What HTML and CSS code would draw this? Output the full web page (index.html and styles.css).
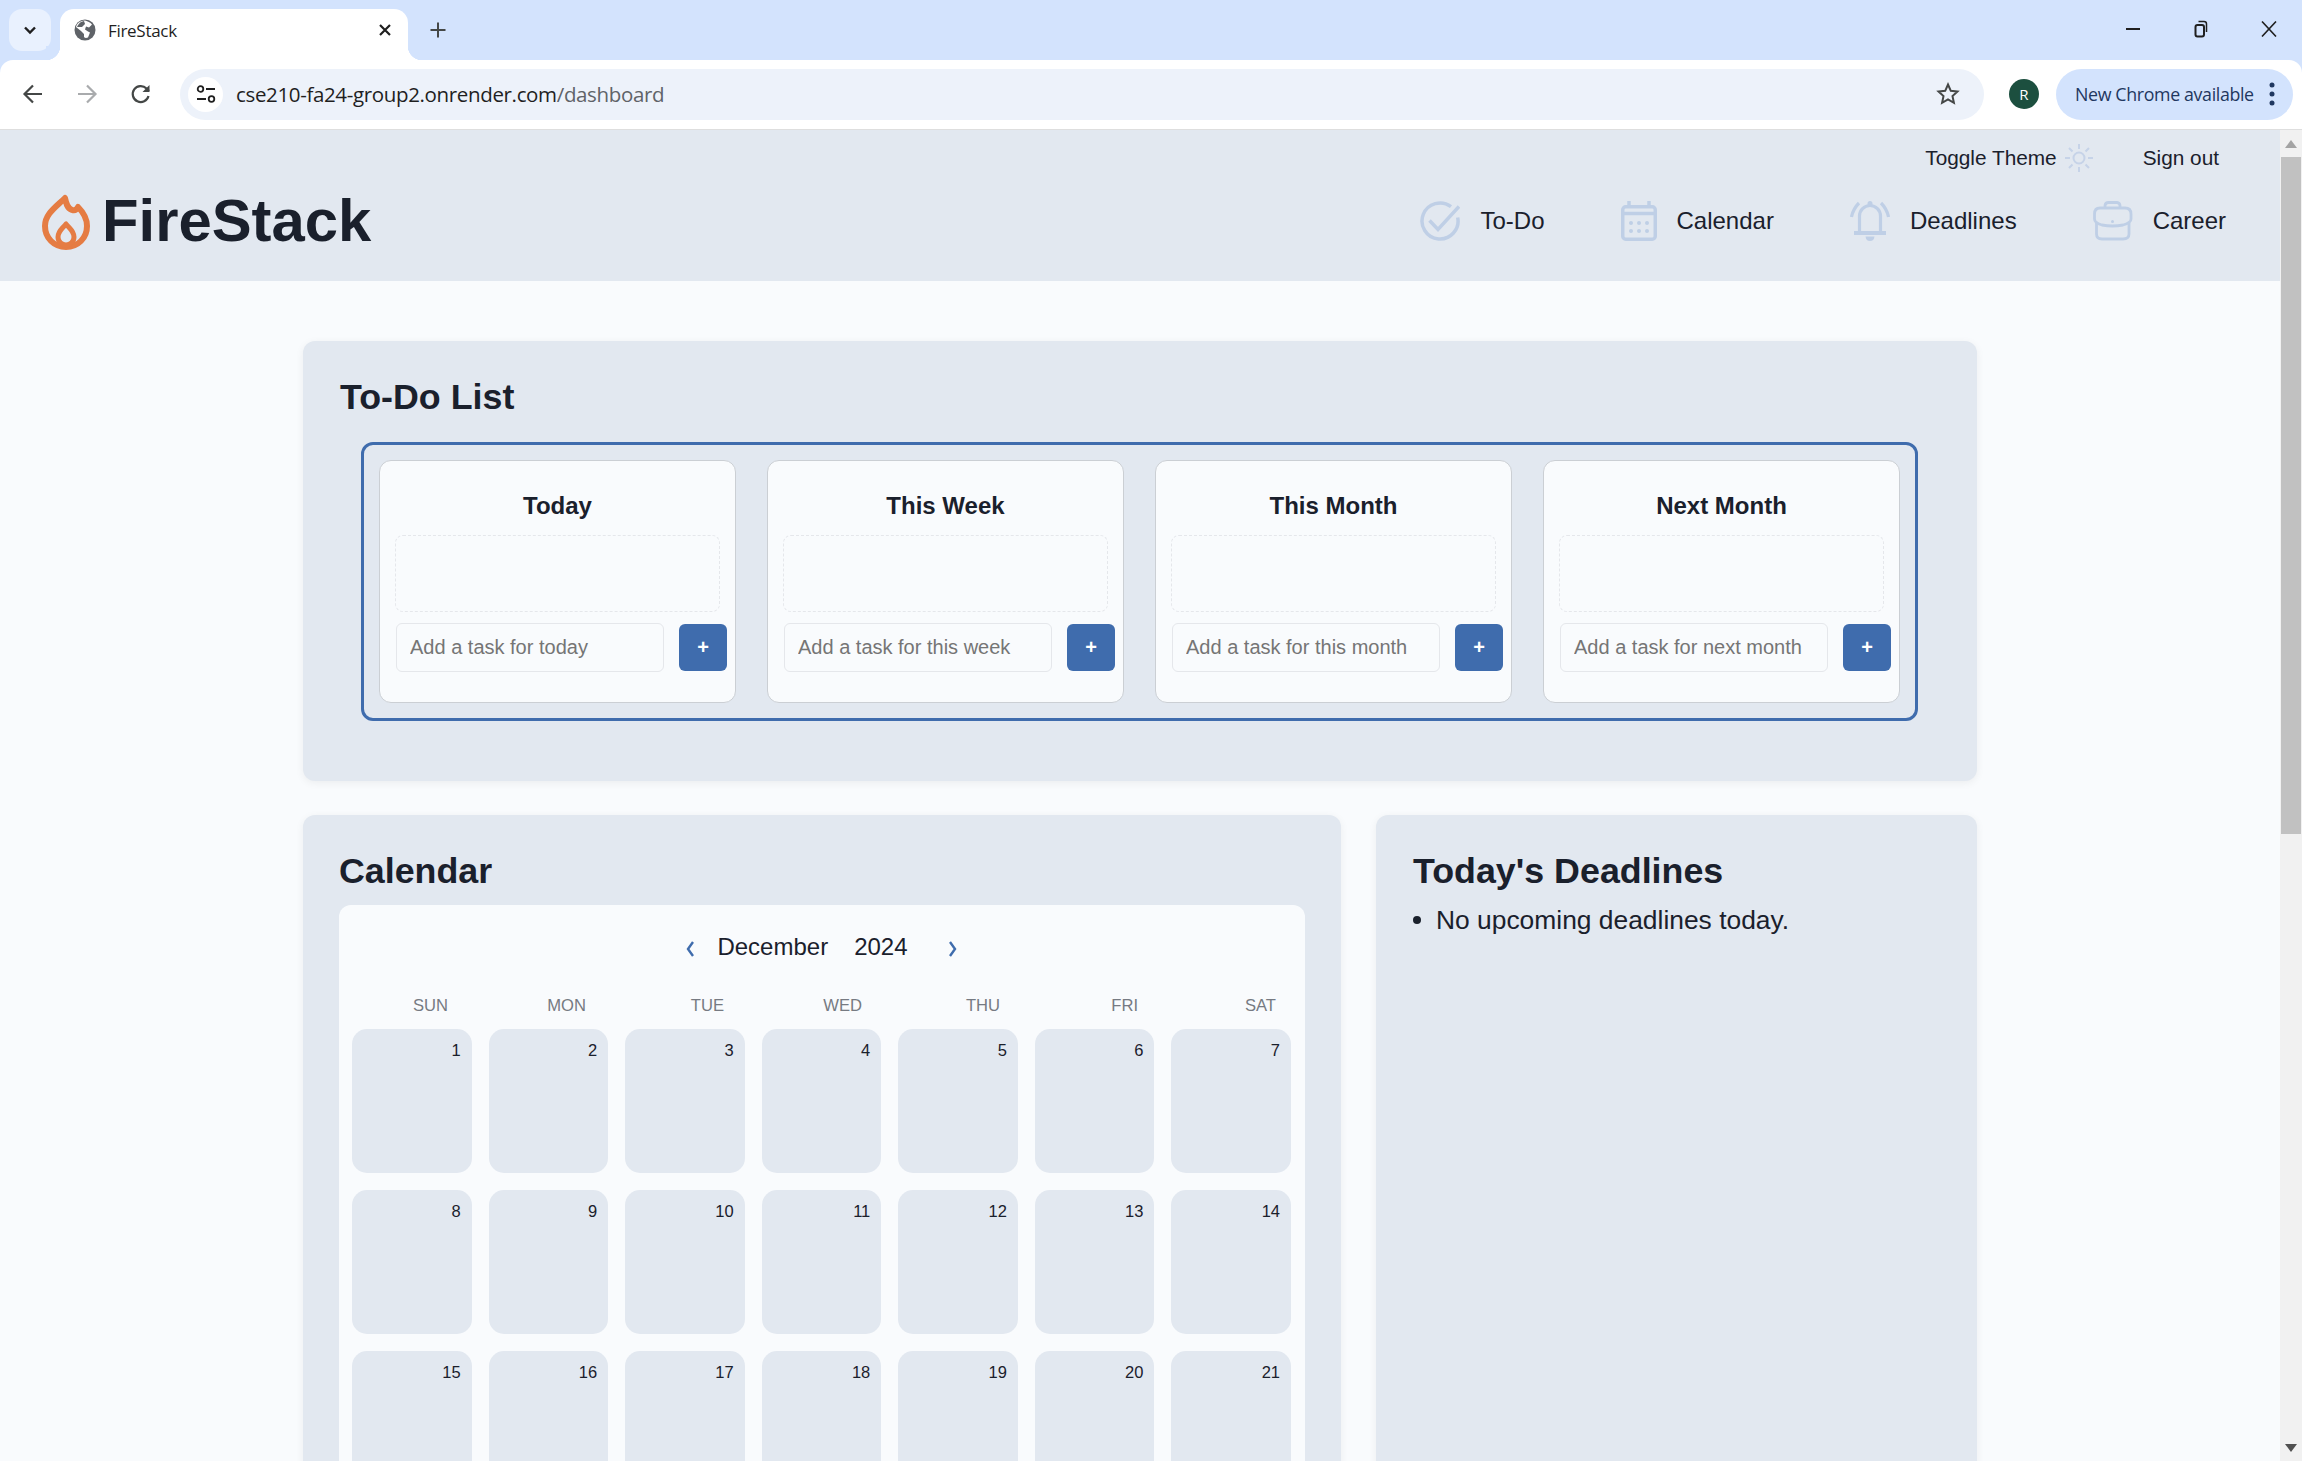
FILE: index.html
```html
<!DOCTYPE html>
<html lang="en">
  <head>
    <meta charset="UTF-8" />
    <title>FireStack</title>
    <link rel="stylesheet" href="styles.css">
  </head>

  <body>
    <div class="tabstrip">
      <div class="tab-search">
        <svg width="18" height="18" viewBox="0 0 18 18"><path d="M4 6.500 9 11.500 14 6.500" fill="none" stroke="#1f1f1f" stroke-width="2.400"/></svg>
      </div>
      <div class="tab">
        <svg class="globe" width="22" height="22" viewBox="0 0 22 22">
          <circle cx="11" cy="11" r="10.500" fill="#5f6368"/>
          <path d="M11 1.500c3 1 5 1.500 7 4l-3 3-3-1-1 3 3 2 2 1-2 5c-2 .8-3 .5-4-.5v-3l-3-3-5-4c.8-3 3-6 9-6.500z" fill="#fff"/>
          <path d="M7 3 10 2 11 5 8 8 3 8C4 6 5 4 7 3z" fill="#5f6368"/>
        </svg>
        <span class="tab-title">FireStack</span>
        <svg class="tab-close" width="14" height="14" viewBox="0 0 14 14"><path d="M2 2 12 12M12 2 2 12" stroke="#1f1f1f" stroke-width="2.200"/></svg>
      </div>
      <svg class="new-tab" width="18" height="18" viewBox="0 0 18 18"><path d="M9 1.500V16.500M1.500 9H16.500" stroke="#444746" stroke-width="2"/></svg>
      <div class="window-controls">
        <svg width="16" height="16" viewBox="0 0 16 16"><path d="M1 8H15" stroke="#1f1f1f" stroke-width="2"/></svg>
        <svg width="16" height="18" viewBox="0 0 16 18"><rect x="2.500" y="5" width="8.500" height="11.500" rx="2" fill="none" stroke="#1f1f1f" stroke-width="2"/><path d="M5.500 1.500H11a2.500 2.500 0 0 1 2.500 2.500V12" fill="none" stroke="#1f1f1f" stroke-width="1.500"/></svg>
        <svg width="16" height="16" viewBox="0 0 16 16"><path d="M1 .5 15 15.500M15 .5 1 15.500" stroke="#1f1f1f" stroke-width="1.600"/></svg>
      </div>
    </div>

    <div class="toolbar">
      <svg class="tool-icon" width="22" height="22" viewBox="0 0 22 22"><path d="M20 11H3M11 2.500 2.500 11 11 19.500" fill="none" stroke="#444746" stroke-width="2.200"/></svg>
      <svg class="tool-icon" width="22" height="22" viewBox="0 0 22 22"><path d="M2 11H19M11 2.500 19.500 11 11 19.500" fill="none" stroke="#a9abad" stroke-width="2.200"/></svg>
      <svg class="tool-icon" width="22" height="22" viewBox="0 0 22 22"><path d="M18.500 13a8 8 0 1 1-2-7.500L19 8" fill="none" stroke="#444746" stroke-width="2.200"/><path d="M19.500 2V9H12.500z" fill="#444746"/></svg>
      <div class="address-bar">
        <div class="site-info">
          <svg width="20" height="20" viewBox="0 0 20 20">
            <circle cx="4.500" cy="5" r="2.800" fill="none" stroke="#1f1f1f" stroke-width="1.800"/>
            <path d="M10 5H19M1 15H10" stroke="#1f1f1f" stroke-width="1.800"/>
            <circle cx="15.500" cy="15" r="2.800" fill="none" stroke="#1f1f1f" stroke-width="1.800"/>
          </svg>
        </div>
        <span class="url">cse210-fa24-group2.onrender.com<span class="url-path">/dashboard</span></span>
        <svg class="star" width="24" height="24" viewBox="0 0 24 24"><path d="M12 2.500l2.800 6.300 6.700.7-5 4.600 1.400 6.700-5.900-3.500-5.900 3.500 1.400-6.700-5-4.600 6.700-.7z" fill="none" stroke="#444746" stroke-width="2"/></svg>
      </div>
      <div class="avatar">R</div>
      <div class="update-pill">
        <span>New Chrome available</span>
        <svg width="6" height="24" viewBox="0 0 6 24"><circle cx="3" cy="3" r="2.500" fill="#1f3760"/><circle cx="3" cy="12" r="2.500" fill="#1f3760"/><circle cx="3" cy="21" r="2.500" fill="#1f3760"/></svg>
      </div>
    </div>

    <div class="viewport">
      <div class="page">
        <header class="header">
          <div class="header-top">
            <div class="theme-toggle">
              <span>Toggle Theme</span>
              <svg width="28" height="28" viewBox="0 0 28 28" fill="none" stroke="#c6d3e8" stroke-width="2">
                <circle cx="14" cy="14" r="5.500"/>
                <path d="M14 0V5M14 23V28M0 14H5M23 14H28M4 4 7.500 7.500M20.500 20.500 24 24M24 4 20.500 7.500M7.500 20.500 4 24"/>
              </svg>
            </div>
            <span>Sign out</span>
          </div>
          <div class="header-main">
            <div class="logo">
              <svg width="48" height="57" viewBox="0 0 48 57" fill="none" stroke="#e57c43" stroke-width="6" stroke-linejoin="round">
                <path d="M23 5C24 10 25 15 30 17 33 18 35 16 36 14 41 19 45 26 45 33 45 45 36 54 24 54 12 54 3 45 3 33 3 21 14 14 23 5Z"/>
                <path stroke-width="5" d="M24 31C20 36 16 38 16 44 16 49 20 52 24 52 28 52 32 49 32 44 32 38 28 36 24 31Z"/>
              </svg>
              <span class="logo-text">FireStack</span>
            </div>
            <nav class="nav">
              <a class="nav-item">
                <svg width="40" height="40" viewBox="0 0 40 40" fill="none" stroke="#bfcfe6" stroke-width="3.500">
                  <path d="M31 5.700A18 18 0 1 0 37.700 16.500"/>
                  <path d="M9.500 19.500 18 28.500 39 5.500"/>
                </svg>
                To-Do
              </a>
              <a class="nav-item">
                <svg width="36" height="40" viewBox="0 0 36 40" fill="none" stroke="#bfcfe6" stroke-width="3.500">
                  <rect x="1.750" y="5.750" width="32.500" height="32.500" rx="3"/>
                  <path d="M1 12.500H35M8 0V6M28 0V6"/>
                  <g fill="#bfcfe6" stroke="none">
                    <circle cx="10" cy="22" r="2"/><circle cx="18" cy="22" r="2"/><circle cx="26" cy="22" r="2"/>
                    <circle cx="10" cy="30" r="2"/><circle cx="18" cy="30" r="2"/><circle cx="26" cy="30" r="2"/>
                  </g>
                </svg>
                Calendar
              </a>
              <a class="nav-item">
                <svg width="40" height="40" viewBox="0 0 40 40" fill="none" stroke="#bfcfe6" stroke-width="3.200">
                  <path d="M9.500 31V15a10.500 10.500 0 0 1 21 0V31"/>
                  <path stroke-width="4" d="M4 32H36"/>
                  <path d="M1.500 16Q3 8 9 2M38.500 16Q37 8 31 2"/>
                  <path fill="#bfcfe6" stroke="none" d="M15.500 35.500H24.500Q24 40 20 40T15.500 35.500Z"/>
                  <circle fill="#bfcfe6" stroke="none" cx="20" cy="2.500" r="2.500"/>
                </svg>
                Deadlines
              </a>
              <a class="nav-item">
                <svg width="40" height="40" viewBox="0 0 40 40" fill="none" stroke="#bfcfe6" stroke-width="2.800">
                  <path d="M12 7V4.500A3.500 3.500 0 0 1 15.500 1.500H24A3.500 3.500 0 0 1 27 4.500V7"/>
                  <path d="M7 7H32Q38 7 38 13V18Q38 22 30 24 19.500 26 9 24 1.500 22 1.500 18V13Q1.500 7 7 7Z"/>
                  <path d="M3.500 22V33Q3.500 38 9 38H30Q36 38 36 33V22"/>
                  <circle fill="#bfcfe6" stroke="none" cx="19.500" cy="20.500" r="1.500"/>
                </svg>
                Career
              </a>
            </nav>
          </div>
        </header>

        <main class="container">
          <section class="card todo-card">
            <h2 class="card-title">To-Do List</h2>
            <div class="todo-box">
              <div class="todo-col">
                <h3>Today</h3>
                <div class="drop-area"></div>
                <form class="add-row">
                  <input type="text" placeholder="Add a task for today" />
                  <button type="button">+</button>
                </form>
              </div>
              <div class="todo-col">
                <h3>This Week</h3>
                <div class="drop-area"></div>
                <form class="add-row">
                  <input type="text" placeholder="Add a task for this week" />
                  <button type="button">+</button>
                </form>
              </div>
              <div class="todo-col">
                <h3>This Month</h3>
                <div class="drop-area"></div>
                <form class="add-row">
                  <input type="text" placeholder="Add a task for this month" />
                  <button type="button">+</button>
                </form>
              </div>
              <div class="todo-col">
                <h3>Next Month</h3>
                <div class="drop-area"></div>
                <form class="add-row">
                  <input type="text" placeholder="Add a task for next month" />
                  <button type="button">+</button>
                </form>
              </div>
            </div>
          </section>

          <div class="bottom-row">
            <section class="card calendar-card">
              <h2 class="card-title">Calendar</h2>
              <div class="calendar">
                <div class="month-row">
                  <svg class="month-prev" width="10" height="16" viewBox="0 0 10 16"><path d="M8 1 3 8 8 15" fill="none" stroke="#3f6cad" stroke-width="2.400"/></svg>
                  <span class="month-name">December</span>
                  <span class="month-year">2024</span>
                  <svg class="month-next" width="10" height="16" viewBox="0 0 10 16"><path d="M2 1 7 8 2 15" fill="none" stroke="#3f6cad" stroke-width="2.400"/></svg>
                </div>
                <div class="weekdays">
                  <span>SUN</span><span>MON</span><span>TUE</span><span>WED</span><span>THU</span><span>FRI</span><span>SAT</span>
                </div>
                <div class="days">
                  <div class="day">1</div><div class="day">2</div><div class="day">3</div><div class="day">4</div><div class="day">5</div><div class="day">6</div><div class="day">7</div>
                  <div class="day">8</div><div class="day">9</div><div class="day">10</div><div class="day">11</div><div class="day">12</div><div class="day">13</div><div class="day">14</div>
                  <div class="day">15</div><div class="day">16</div><div class="day">17</div><div class="day">18</div><div class="day">19</div><div class="day">20</div><div class="day">21</div>
                </div>
              </div>
            </section>

            <section class="card deadlines-card">
              <h2 class="card-title">Today's Deadlines</h2>
              <ul class="deadline-list">
                <li>No upcoming deadlines today.</li>
              </ul>
            </section>
          </div>
        </main>
      </div>

      <div class="scrollbar">
        <div class="scroll-btn"><svg width="12" height="8" viewBox="0 0 12 8"><path d="M6 0 12 8H0z" fill="#a3a3a3"/></svg></div>
        <div class="scroll-thumb"></div>
        <div class="scroll-btn scroll-btn-down"><svg width="12" height="8" viewBox="0 0 12 8"><path d="M0 0H12L6 8z" fill="#505050"/></svg></div>
      </div>
    </div>
  </body>
</html>
```

FILE: styles.css
```css
html,
body {
  height: 100%;
  overflow: hidden;
}

body {
  margin: 0;
  padding: 0;
  display: flex;
  flex-direction: column;
  font-family: "Liberation Sans", Arial, sans-serif;
  color: #1a202c;
  background-color: #d3e3fd;
}

/* browser chrome */
.tabstrip {
  height: 60px;
  flex: none;
  display: flex;
  align-items: flex-start;
  padding: 9px 0 0 9px;
  box-sizing: border-box;
  background-color: #d3e3fd;
}

.tab-search {
  width: 42px;
  height: 42px;
  display: flex;
  align-items: center;
  justify-content: center;
  border-radius: 13px;
  background-color: #e9f1fe;
}

.tab {
  position: relative;
  width: 348px;
  height: 51px;
  margin-left: 9px;
  padding: 0 16px 9px 14px;
  box-sizing: border-box;
  display: flex;
  align-items: center;
  border-radius: 14px 14px 0 0;
  background-color: #fff;
}

.tab::before,
.tab::after {
  content: "";
  position: absolute;
  bottom: 0;
  width: 14px;
  height: 14px;
}

.tab::before {
  left: -14px;
  background: radial-gradient(circle at 0 0, #d3e3fd 14px, #fff 14.5px);
}

.tab::after {
  right: -14px;
  background: radial-gradient(circle at 100% 0, #d3e3fd 14px, #fff 14.5px);
}

.tab-title {
  margin-left: 12px;
  flex: 1;
  font-family: "Open Sans", sans-serif;
  font-size: 17px;
  letter-spacing: -0.3px;
  color: #1f1f1f;
}

.new-tab {
  margin: 12px 0 0 21px;
}

.window-controls {
  margin-left: auto;
  margin-top: -1px;
  width: 177px;
  height: 42px;
  padding-right: 25px;
  box-sizing: border-box;
  display: flex;
  align-items: center;
  justify-content: space-between;
}

.toolbar {
  height: 70px;
  flex: none;
  position: relative;
  display: flex;
  align-items: center;
  padding: 0 9px 1px 22px;
  box-sizing: border-box;
  border-radius: 13px 13px 0 0;
  border-bottom: 1px solid #dedede;
  background-color: #fff;
}

.tool-icon {
  margin-right: 32px;
}

.tool-icon:nth-child(3) {
  margin-right: 28px;
}

.address-bar {
  flex: 1;
  height: 51px;
  display: flex;
  align-items: center;
  padding: 0 24px 0 8px;
  border-radius: 26px;
  background-color: #edf2fa;
}

.site-info {
  width: 35px;
  height: 35px;
  display: flex;
  align-items: center;
  justify-content: center;
  border-radius: 50%;
  background-color: #fff;
}

.url {
  margin-left: 13px;
  flex: 1;
  font-family: "Open Sans", sans-serif;
  font-size: 20.500px;
  letter-spacing: -0.35px;
  color: #1f1f1f;
}

.url-path {
  color: #5f6368;
}

.avatar {
  width: 30px;
  height: 30px;
  margin: 0 17px 0 25px;
  flex: none;
  display: flex;
  align-items: center;
  justify-content: center;
  border-radius: 50%;
  font-family: "Open Sans", sans-serif;
  font-size: 15px;
  color: #fff;
  background-color: #1c4f3f;
}

.update-pill {
  width: 237px;
  height: 51px;
  flex: none;
  box-sizing: border-box;
  padding: 0 18px 0 19px;
  display: flex;
  align-items: center;
  justify-content: space-between;
  border-radius: 26px;
  font-family: "Open Sans", sans-serif;
  font-size: 17.800px;
  letter-spacing: -0.35px;
  color: #1f3760;
  background-color: #d3e3fd;
}

/* page */
.viewport {
  flex: 1;
  min-height: 0;
  display: flex;
}

.page {
  flex: 1;
  min-width: 0;
  background-color: #f9fbfd;
}

.header {
  height: 151px;
  padding: 14px 54px 0 42px;
  box-sizing: border-box;
  background-color: #e2e8f0;
}

.header-top {
  display: flex;
  justify-content: flex-end;
  align-items: center;
  gap: 50px;
  padding-right: 7px;
  font-size: 20.800px;
}

.theme-toggle {
  display: flex;
  align-items: center;
  gap: 8px;
}

.header-main {
  display: flex;
  justify-content: space-between;
  align-items: center;
  margin-top: 19px;
}

.logo {
  display: flex;
  align-items: center;
  gap: 12px;
}

.logo-text {
  font-size: 59.800px;
  font-weight: bold;
  line-height: 60px;
}

.nav {
  display: flex;
  gap: 76px;
  align-items: center;
}

.nav-item {
  display: flex;
  align-items: center;
  gap: 20px;
  font-size: 24px;
}

.container {
  width: 1674px;
  margin-left: 303px;
  padding-top: 60px;
}

.card {
  box-sizing: border-box;
  border-radius: 12px;
  background-color: #e2e8f0;
  box-shadow: 0 2px 9px rgba(0, 0, 0, 0.06);
}

.card-title {
  margin: 0;
  font-size: 35.800px;
  font-weight: bold;
  line-height: 40px;
}

.todo-card {
  height: 440px;
  padding: 36px 37px 0;
}

.todo-box {
  margin: 25px 22px 0 21px;
  height: 279px;
  padding: 15px;
  box-sizing: border-box;
  display: grid;
  grid-template-columns: repeat(4, minmax(0, 1fr));
  gap: 31px;
  border: 3px solid #3f6cad;
  border-radius: 12px;
}

.todo-col {
  height: 243px;
  padding: 30px 15px 0;
  box-sizing: border-box;
  border: 1.500px solid #cbcfd4;
  border-radius: 12px;
  background-color: #f9fbfd;
}

.todo-col h3 {
  margin: 0 0 14px;
  font-size: 24px;
  line-height: 30px;
  text-align: center;
}

.drop-area {
  height: 77px;
  box-sizing: border-box;
  border: 1.500px dashed #e5e7eb;
  border-radius: 8px;
}

.add-row {
  margin: 11px -7px 0 1px;
  display: flex;
  align-items: center;
  gap: 15px;
}

.add-row input {
  flex: 1;
  min-width: 0;
  height: 49px;
  padding: 0 13px;
  box-sizing: border-box;
  border: 1.500px solid #e5e7eb;
  border-radius: 6px;
  font-family: inherit;
  font-size: 20px;
  background-color: #f9fbfd;
}

.add-row input::placeholder {
  color: #757575;
}

.add-row button {
  width: 48px;
  height: 47px;
  flex: none;
  padding: 0;
  border: none;
  border-radius: 6px;
  font-family: inherit;
  font-size: 20px;
  font-weight: bold;
  color: #fff;
  background-color: #3f6cad;
}

.bottom-row {
  margin-top: 34px;
  display: grid;
  grid-template-columns: 1038px 601px;
  gap: 35px;
}

.calendar-card {
  padding: 36px 36px 40px;
}

.calendar {
  margin-top: 14px;
  padding: 27px 14px 30px 13px;
  border-radius: 12px;
  background-color: #f9fbfd;
}

.month-row {
  height: 30px;
  display: flex;
  justify-content: center;
  align-items: center;
  font-size: 24px;
}

.month-prev {
  margin: 4px 22px 0 0;
}

.month-year {
  margin: 0 40px 0 26px;
}

.month-next {
  margin-top: 4px;
}

.weekdays {
  margin-top: 34px;
  padding-right: 15px;
  display: grid;
  grid-template-columns: 96px repeat(6, 1fr);
  font-size: 16.600px;
  line-height: 20px;
  text-align: right;
  color: #767a82;
}

.days {
  margin-top: 13px;
  display: grid;
  grid-template-columns: repeat(7, 1fr);
  gap: 17px;
}

.day {
  height: 144px;
  padding: 11px 11px 0 0;
  box-sizing: border-box;
  border-radius: 15px;
  font-size: 16.500px;
  line-height: 20px;
  text-align: right;
  background-color: #e2e8f0;
}

.deadlines-card {
  padding: 36px 37px 0;
}

.deadline-list {
  margin: 10px 0 0;
  padding: 0;
  list-style: none;
}

.deadline-list li {
  display: flex;
  align-items: center;
  gap: 15px;
  font-size: 26.400px;
  line-height: 38px;
}

.deadline-list li::before {
  content: "";
  width: 8px;
  height: 8px;
  border-radius: 50%;
  background-color: #1a202c;
}

/* scrollbar */
.scrollbar {
  width: 22px;
  flex: none;
  display: flex;
  flex-direction: column;
  background-color: #f1f1f1;
}

.scroll-btn {
  height: 27px;
  display: flex;
  align-items: center;
  justify-content: center;
}

.scroll-btn-down {
  margin-top: auto;
}

.scroll-thumb {
  height: 677px;
  margin: 0 1px;
  background-color: #c1c1c1;
}
```
